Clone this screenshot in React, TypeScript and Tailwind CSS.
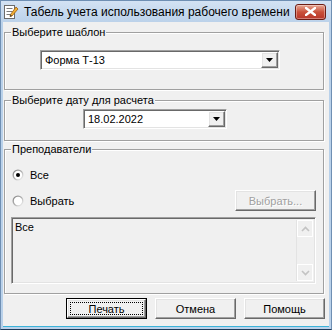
import React from 'react'

const raised =
  'border border-t-white border-l-white border-r-[#696969] border-b-[#696969] shadow-[inset_-1px_-1px_0_#a0a0a0,inset_1px_1px_0_#e3e3e3]'
const sunken =
  'border border-t-[#a0a0a0] border-l-[#a0a0a0] border-r-white border-b-white shadow-[inset_1px_1px_0_#696969,inset_-1px_-1px_0_#e3e3e3]'
const groupBox =
  'border border-[#a0a0a0] shadow-[1px_1px_0_#fff,inset_1px_1px_0_#fff]'

function Radio({ checked }: { checked?: boolean }) {
  return (
    <svg width="12" height="12" viewBox="0 0 12 12" className="shrink-0">
      <defs>
        <linearGradient id={checked ? 'ra' : 'rb'} x1="0" y1="0" x2="1" y2="1">
          <stop offset="0" stopColor="#808080" />
          <stop offset="0.5" stopColor="#b0b0b0" />
          <stop offset="1" stopColor="#ffffff" />
        </linearGradient>
      </defs>
      <circle cx="6" cy="6" r="5.5" fill={`url(#${checked ? 'ra' : 'rb'})`} />
      <circle cx="6" cy="6" r="4.2" fill="#fff" />
      {checked && <circle cx="6" cy="6" r="2" fill="#000" />}
    </svg>
  )
}

function Arrow() {
  return (
    <svg width="7" height="4" viewBox="0 0 7 4">
      <polygon points="0,0 7,0 3.5,4" fill="#000" />
    </svg>
  )
}

function Combo({ value, className }: { value: string; className: string }) {
  return (
    <div className={`${sunken} ${className} bg-white h-[20px] flex items-center p-[1px]`}>
      <span className="flex-1 pl-[3px] text-[11px] leading-[14px] text-black">{value}</span>
      <div className={`${raised} bg-[#f0f0f0] w-[17px] h-full flex items-center justify-center`}>
        <Arrow />
      </div>
    </div>
  )
}

function Button({ label, isDefault, disabled, className = '' }: { label: string; isDefault?: boolean; disabled?: boolean; className?: string }) {
  if (isDefault) {
    return (
      <div className={`${className} w-[81px] h-[21px] border border-black`}>
        <div className={`${raised} bg-[#f0f0f0] w-full h-full p-[2px]`}>
          <div className="w-full h-full border border-dotted border-black flex items-center justify-center text-[11px] leading-[14px] text-black">
            {label}
          </div>
        </div>
      </div>
    )
  }
  return (
    <div
      className={`${className} ${raised} bg-[#f0f0f0] w-[81px] h-[21px] flex items-center justify-center text-[11px] leading-[14px] ${
        disabled ? 'text-[#a0a0a0] [text-shadow:1px_1px_0_#fff]' : 'text-black'
      }`}
    >
      {label}
    </div>
  )
}

function TitleIcon() {
  return (
    <svg width="16" height="16" viewBox="0 0 16 16">
      <rect x="1.5" y="1.5" width="10" height="13" fill="#fff" stroke="#6b6b6b" />
      <line x1="3.5" y1="4.5" x2="9.5" y2="4.5" stroke="#7a7a7a" />
      <line x1="3.5" y1="7.5" x2="9.5" y2="7.5" stroke="#7a7a7a" />
      <line x1="3.5" y1="10.5" x2="8" y2="10.5" stroke="#7a7a7a" />
      <polygon points="13,3 15,5 9,12 7,12.5 7.5,10.5" fill="#f2b134" stroke="#9a5b12" strokeWidth="0.8" />
      <polygon points="7,12.5 7.5,10.5 9,12" fill="#333" />
    </svg>
  )
}

export default function App() {
  return (
    <div className="w-[332px] h-[330px] flex flex-col bg-[#b9d1ea] border border-[#6f8fb3] border-b-[#1e3a5a] font-['Liberation_Sans',Arial,sans-serif] select-none">
      {/* title bar */}
      <div className="h-[21px] flex items-center bg-gradient-to-b from-[#d3e2f3] to-[#bcd2ea]">
        <div className="ml-[2px] mt-[1px]">
          <TitleIcon />
        </div>
        <span className="ml-[5px] text-[12px] leading-[16px] text-black whitespace-nowrap">
          Табель учета использования рабочего времени
        </span>
        <div className="ml-auto mr-[5px] w-[31px] h-[16px] rounded-[3px] border border-[#6d1d14] bg-gradient-to-b from-[#e7a896] via-[#c9503a] to-[#b8362a] flex items-center justify-center shadow-[inset_0_0_0_1px_rgba(255,255,255,0.35)]">
          <svg width="11" height="9" viewBox="0 0 11 9">
            <path d="M1 1 L10 8 M10 1 L1 8" stroke="#fff" strokeWidth="2.4" strokeLinecap="square" />
          </svg>
        </div>
      </div>

      {/* client area */}
      <div className="flex-1 mx-[2px] mb-[2px] bg-[#f0f0f0] flex flex-col text-[11px] leading-[14px] text-black border-b border-[#3bb3d9]">
        <fieldset className={`${groupBox} ml-[1px] mt-[3px] w-[320px] pb-[19px]`}>
          <legend className="ml-[6px] px-[1px] h-[14px] bg-[#f0f0f0]">Выберите шаблон</legend>
          <Combo value="Форма Т-13" className="ml-[35px] mt-[11px] w-[240px]" />
        </fieldset>

        <fieldset className={`${groupBox} ml-[1px] mt-[3px] w-[320px] pb-[11px]`}>
          <legend className="ml-[6px] px-[1px] h-[14px] bg-[#f0f0f0]">Выберите дату для расчета</legend>
          <Combo value="18.02.2022" className="ml-[78px] mt-[2px] w-[144px]" />
        </fieldset>

        <fieldset className={`${groupBox} ml-[1px] mt-[1px] w-[320px] pb-[9px] flex flex-col`}>
          <legend className="ml-[6px] px-[1px] h-[14px] bg-[#f0f0f0]">Преподаватели</legend>
          <div className="mt-[11px] ml-[7px] h-[16px] flex items-center gap-[6px]">
            <Radio checked />
            <span>Все</span>
          </div>
          <div className="mt-[7px] ml-[7px] mr-[7px] h-[21px] flex items-center gap-[6px]">
            <Radio />
            <span>Выбрать</span>
            <Button label="Выбрать..." disabled className="ml-auto" />
          </div>
          <div className={`${sunken} mt-[6px] ml-[6px] mr-[7px] h-[67px] bg-[#f0f0f0] flex p-[2px]`}>
            <span className="flex-1 pl-[1px]">Все</span>
            <div className="w-[17px] h-full flex flex-col bg-[#f0f0f0] border-l border-[#e3e3e3]">
              <div className="h-[17px] flex items-center justify-center border border-white">
                <svg width="9" height="6" viewBox="0 0 9 6">
                  <path d="M1 5 L4.5 1.5 L8 5" fill="none" stroke="#c3c3c3" strokeWidth="1.6" />
                </svg>
              </div>
              <div className="flex-1" />
              <div className="h-[17px] flex items-center justify-center border border-white">
                <svg width="9" height="6" viewBox="0 0 9 6">
                  <path d="M1 1 L4.5 4.5 L8 1" fill="none" stroke="#c3c3c3" strokeWidth="1.6" />
                </svg>
              </div>
            </div>
          </div>
        </fieldset>

        <div className="mt-[4px] mr-[4px] flex justify-end gap-[8px]">
          <Button label="Печать" isDefault />
          <Button label="Отмена" />
          <Button label="Помощь" />
        </div>
      </div>
    </div>
  )
}
